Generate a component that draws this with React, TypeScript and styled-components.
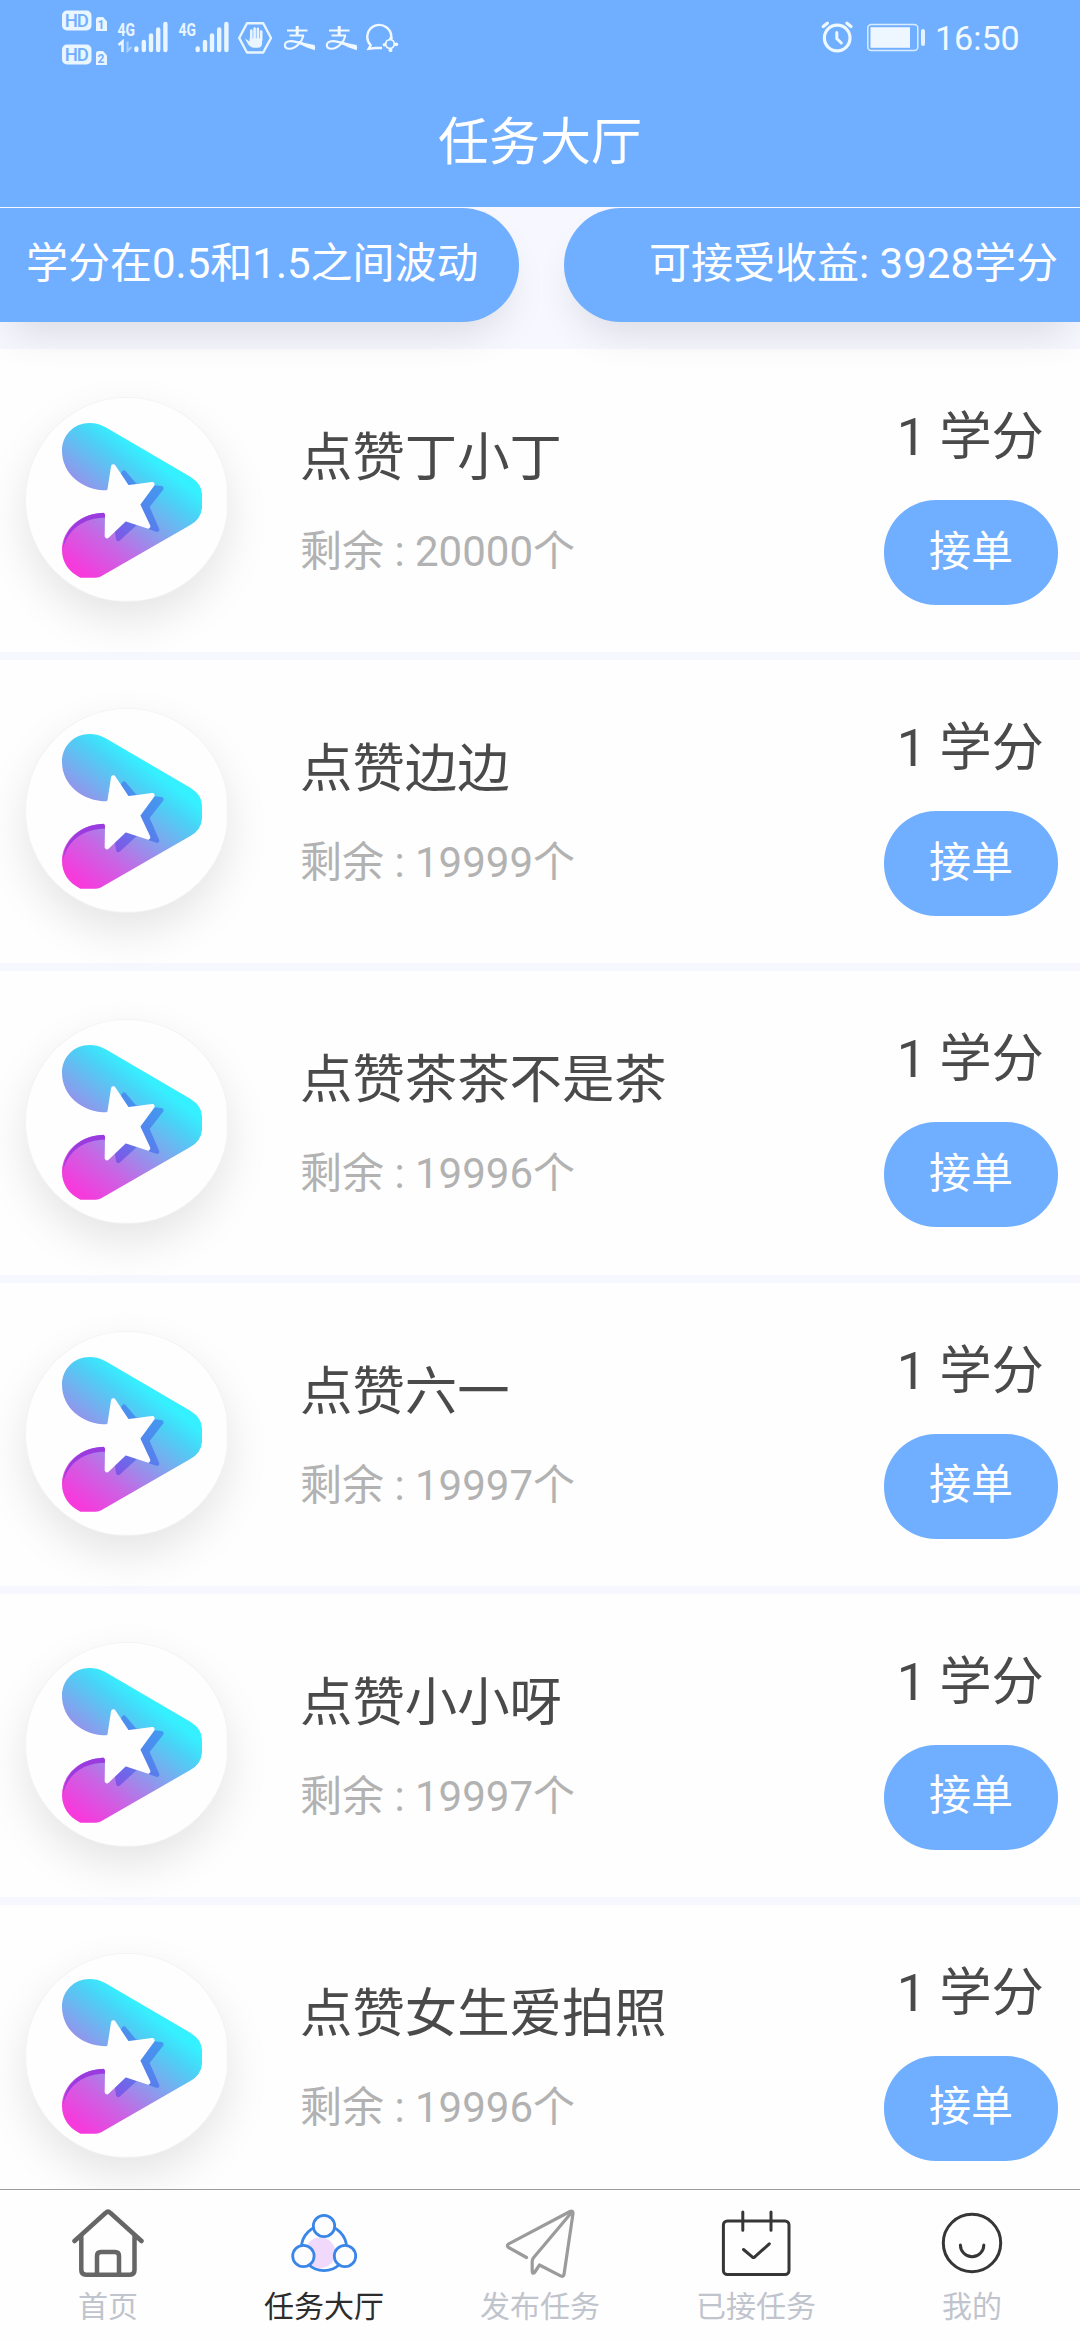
import React from "react";
import styled, { createGlobalStyle } from "styled-components";

const BLUE = "#70aeff";

const GlobalStyle = createGlobalStyle`
  * { box-sizing: border-box; }
  body {
    margin: 0;
    background: #fefefe;
    font-family: Roboto, "Noto Sans CJK SC", sans-serif;
  }
`;

const Screen = styled.div`
  width: 1080px;
  height: 2340px;
  display: flex;
  flex-direction: column;
  overflow: hidden;
  background: #fefefe;
`;

const Header = styled.header`
  position: relative;
  z-index: 2;
  height: 207px;
  flex: none;
  background: ${BLUE};
  color: #fff;
`;

const StatusBar = styled.div`
  height: 80px;
  display: flex;
  justify-content: space-between;
`;

const StatusGroup = styled.div<{ $inset?: number }>`
  display: flex;
  padding-left: ${(p) => p.$inset ?? 0}px;
`;

const StatusIcon = styled.svg<{ $before?: number; $after?: number }>`
  display: block;
  flex: none;
  margin-left: ${(p) => p.$before ?? 0}px;
  margin-right: ${(p) => p.$after ?? 0}px;
`;

const Clock = styled.span`
  margin: 18px 60px 0 0;
  width: 85px;
  font-size: 34px;
  line-height: 40px;
  color: #f2faff;
  white-space: nowrap;
`;

const PageTitle = styled.h1`
  margin: 28px 0 0;
  text-align: center;
  font-size: 51px;
  font-weight: 400;
  line-height: 70px;
`;

const Summary = styled.section`
  position: relative;
  z-index: 1;
  flex: none;
  height: 142px;
  padding-top: 1px;
  display: flex;
  justify-content: space-between;
  align-items: flex-start;
  background: #f6f7ff;
`;

const Pill = styled.div<{ $side: "left" | "right" }>`
  width: ${(p) => (p.$side === "left" ? 519 : 516)}px;
  height: 114px;
  padding: ${(p) => (p.$side === "left" ? "0 0 0 26px" : "0 0 0 85px")};
  border-radius: ${(p) => (p.$side === "left" ? "0 57px 57px 0" : "57px 0 0 57px")};
  background: ${BLUE};
  box-shadow: 0 22px 42px -12px rgba(0, 0, 0, 0.12);
  color: #fff;
  font-size: 42px;
  line-height: 112px;
  white-space: nowrap;
`;

const TaskList = styled.main`
  flex: 1;
  min-height: 0;
  overflow: hidden;
`;

const TaskRow = styled.article`
  height: 311.2px;
  display: flex;
  align-items: flex-start;
  padding: 48px 22px 0 25px;
  border-bottom: 8px solid #f6f7ff;
`;

const Avatar = styled.div`
  width: 204px;
  height: 205px;
  flex: none;
  border-radius: 50%;
  overflow: hidden;
  background: #f3f3f4;
  box-shadow: 0 18px 44px rgba(0, 0, 0, 0.1);
  svg { display: block; }
`;

const TaskInfo = styled.div`
  flex: 1;
  margin-left: 71px;
  padding-top: 27px;
`;

const TaskName = styled.div`
  font-size: 52.4px;
  line-height: 68px;
  color: #4a4a4a;
`;

const Remaining = styled.div`
  margin-top: 32px;
  font-size: 42px;
  line-height: 56px;
  color: #b2b2b2;
`;

const TaskSide = styled.div`
  display: flex;
  flex-direction: column;
  align-items: flex-end;
`;

const Reward = styled.div`
  padding-right: 14px;
  margin-top: 6px;
  font-size: 52.4px;
  line-height: 68px;
  color: #4a4a4a;
`;

const AcceptButton = styled.button`
  width: 174px;
  height: 105px;
  margin-top: 29px;
  padding: 0 0 2px;
  border: 0;
  border-radius: 52px;
  background: ${BLUE};
  color: #fff;
  font: 400 42px/56px Roboto, "Noto Sans CJK SC", sans-serif;
`;

const TabBar = styled.nav`
  flex: none;
  height: 151px;
  display: flex;
  border-top: 1px solid #999c9e;
  background: #fefefe;
`;

const Tab = styled.div<{ $active?: boolean }>`
  flex: 1;
  display: flex;
  flex-direction: column;
  align-items: center;
  padding-top: 17px;
  font-size: 30px;
  line-height: 40px;
  color: ${(p) => (p.$active ? "#2c2c2c" : "#c0c4cc")};
  svg { display: block; margin-bottom: 8px; }
`;

const Bars = ({ xs }: { xs: number[] }) => (
  <g stroke="#e9f6ff" strokeWidth="4.4" strokeLinecap="round">
    {xs.map((x, i) => (
      <line key={x} x1={x} x2={x} y1={[48.5, 42, 35.5, 29.5, 24][i]} y2={50} />
    ))}
  </g>
);

const NetworkIcons = () => (
  <StatusIcon width="190" height="80" viewBox="40 0 190 80" fontFamily="Roboto, sans-serif" fontWeight="700">
    <rect x="62" y="10.5" width="29.5" height="20" rx="5" fill="#e9f6ff" />
    <rect x="62" y="44.5" width="29.5" height="20" rx="5" fill="#e9f6ff" />
    <g fill={BLUE} fontSize="18.5" fontWeight="500" textAnchor="middle">
      <text x="76.800" y="27.200" textLength="24">HD</text>
      <text x="76.800" y="61.200" textLength="24">HD</text>
    </g>
    <path d="M96 19.500q0-2.500 2.500-2.500h4.500l4 4.500v9.500h-11z" fill="#e9f6ff" />
    <path d="M96 53.500q0-2.500 2.500-2.500h4.500l4 4.500v9.500h-11z" fill="#e9f6ff" />
    <g fill={BLUE} fontSize="12" textAnchor="middle">
      <text x="101" y="28.500">1</text>
      <text x="101" y="62.500">2</text>
    </g>
    <g fill="#e9f6ff" fontSize="19" fontWeight="700">
      <text x="117.500" y="35.500" textLength="17.500" lengthAdjust="spacingAndGlyphs">4G</text>
      <text x="178.500" y="35.500" textLength="17.500" lengthAdjust="spacingAndGlyphs">4G</text>
    </g>
    <path d="M118.500 45l4-3.500V52" fill="none" stroke="#e9f6ff" strokeWidth="2.600" />
    <path d="M127.500 41.500V51l4-4" fill="none" stroke="#a9d2ff" strokeWidth="2" />
    <Bars xs={[136.4, 143.8, 151, 158.2, 165.4]} />
    <Bars xs={[197.7, 205, 212, 219.2, 226.4]} />
  </StatusIcon>
);

const HandIcon = () => (
  <StatusIcon width="36" height="80" viewBox="237 0 36 80" $before={7}>
    <path d="M247 23.300h16.200L271 38l-7.800 14.500H247L239.200 38z" fill="none" stroke="#e9f6ff" strokeWidth="2.400" strokeLinejoin="round" />
    <g stroke="#e9f6ff" strokeWidth="2.600" strokeLinecap="round" fill="#e9f6ff">
      <path d="M251.300 40V30.500M254.600 39V28.500M257.900 39V28.800M261.200 40V31.500" />
      <path d="M246.800 40.500l3.500 2.500v-4h11v4q0 4-3.500 4h-4q-4 0-7-6.500z" strokeWidth="1.500" />
    </g>
  </StatusIcon>
);

const PayIcon = ({ gap }: { gap: number }) => (
  <StatusIcon width="33" height="80" viewBox="282.500 0 33 80" $before={gap}>
    <g fill="none" stroke="#f0f9ff">
      <path d="M286.500 30.400h20.500M289 35.500h14.500" strokeWidth="2" />
      <path d="M296.700 26v10" strokeWidth="3" />
      <path d="M303 35.500c-1.500 6-7 12.800-14 13.300-5.500.3-6.300-5.600-1.500-7.300 6-1.800 15 2.500 27 6.800" strokeWidth="2" />
    </g>
    <path d="M299 41.300c5 1.800 10 2.700 15.300 3.600v5.300c-6-1.800-11.500-4.300-16.500-6.800z" fill="#f0f9ff" />
  </StatusIcon>
);

const ChatIcon = () => (
  <StatusIcon width="34" height="80" viewBox="364 0 34 80" $before={7.5}>
    <path d="M390.300 37.500a12 12 0 1 0-20.600 7.800l-2 3.500 6.800-.8h6.500" fill="none" stroke="#f0f9ff" strokeWidth="2.400" />
    <circle cx="389" cy="44" r="4.300" fill="none" stroke="#f0f9ff" strokeWidth="1.800" />
    <g fill="#f0f9ff">
      <circle cx="390" cy="38.200" r="1.800" />
      <circle cx="395.300" cy="44.300" r="1.900" />
      <circle cx="389.500" cy="50.200" r="1.900" />
      <circle cx="383.300" cy="44.700" r="1.700" />
    </g>
  </StatusIcon>
);

const AlarmIcon = () => (
  <StatusIcon width="34" height="80" viewBox="820 0 34 80">
    <g fill="none" stroke="#edf8ff" strokeLinecap="round">
      <circle cx="837.200" cy="38" r="12.800" strokeWidth="3.200" />
      <path d="M836.800 32.500v6.200l4.500 4.300" strokeWidth="3" />
      <path d="M823.300 26.500l4-3.300M851 26.500l-4-3.300" strokeWidth="3.400" />
    </g>
  </StatusIcon>
);

const BatteryIcon = () => (
  <StatusIcon width="60" height="80" viewBox="866 0 60 80" $before={12} $after={9}>
    <rect x="867.800" y="24.600" width="50" height="26" rx="3.500" fill="none" stroke="#d8edff" strokeWidth="1.500" />
    <rect x="870.500" y="27.200" width="39.500" height="20.600" fill="#eef6ff" />
    <rect x="921" y="29" width="4" height="17" rx="2" fill="#e4f3ff" />
  </StatusIcon>
);

const PlayLogo = () => (
  <svg width="204" height="205" viewBox="76 80 612 615">
    <defs>
      <linearGradient id="play" gradientUnits="userSpaceOnUse" x1="250" y1="610" x2="494" y2="294">
        <stop offset="0" stopColor="#f63adc" />
        <stop offset=".28" stopColor="#c964e4" />
        <stop offset=".58" stopColor="#85a0ed" />
        <stop offset=".86" stopColor="#48d4f6" />
        <stop offset="1" stopColor="#35f0ff" />
      </linearGradient>
      <linearGradient id="shade" gradientUnits="userSpaceOnUse" x1="340" y1="510" x2="480" y2="340">
        <stop offset="0" stopColor="#8650e6" />
        <stop offset=".5" stopColor="#5680ec" />
        <stop offset="1" stopColor="#419bf0" />
      </linearGradient>
      <clipPath id="disc">
        <ellipse cx="382" cy="387.500" rx="303" ry="305" />
      </clipPath>
    </defs>
    <g clipPath="url(#disc)">
      <rect x="79" y="82" width="602" height="609" fill="#fefefe" />
    </g>
    <path
      d="M270 158Q296 158 318 171L572 319Q607 341 607 372V412Q605 445 572 464L306 617Q299 622 288 622H242C208 606 187 576 187 540C187 474 245 427 317 427L380 394L323 360C245 360 187 309 187 241C187 194 223 158 270 158Z"
      fill="url(#play)"
    />
    <path d="M190 536C195 470 247 427 317 427V442C255 442 204 474 190 536Z" fill="#9a3be0" />
    <path
      d="M373 307L406 346L485 354L442 409L472 478L410 456L356 505L340 395Z"
      fill="url(#shade)"
      stroke="url(#shade)"
      strokeWidth="14"
      strokeLinejoin="round"
    />
    <path
      d="M341 289L383 352L458 342L414 402L445 468L377 445L322 497L323 430L300 394L330 360Z"
      fill="#fefefe"
      stroke="#fefefe"
      strokeWidth="14"
      strokeLinejoin="round"
    />
  </svg>
);

const TabIcon = ({ children, color, width }: { children: React.ReactNode; color: string; width: number }) => (
  <svg width="72" height="72" viewBox="0 0 72 72" fill="none" stroke={color} strokeWidth={width} strokeLinecap="round" strokeLinejoin="round">
    {children}
  </svg>
);

const tabs = [
  {
    label: "首页",
    icon: (
      <TabIcon color="#666" width={4.5}>
        <path d="M2.500 34L33.500 6q2.500-2.500 5 0L69.500 34M9.300 29v34q0 4.700 4.700 4.700h44q4.500 0 4.500-4.700V29M25 67V49q0-4 4-4h14q4 0 4 4v18" />
      </TabIcon>
    ),
  },
  {
    label: "任务大厅",
    active: true,
    icon: (
      <TabIcon color="#3a86e8" width={2.8}>
        <circle cx="32.200" cy="45.700" r="15.300" fill="#f1d9fb" stroke="none" />
        <circle cx="36" cy="41" r="22.600" />
        <circle cx="36" cy="19" r="10.700" fill="#fefefe" />
        <circle cx="15.400" cy="49" r="10.700" fill="#fefefe" />
        <circle cx="57" cy="49" r="10.700" fill="#fefefe" />
      </TabIcon>
    ),
  },
  {
    label: "发布任务",
    icon: (
      <TabIcon color="#9b9b9b" width={3.2}>
        <path d="M22.500 50.500L4.500 40.500q-2.300-1.800.2-3.600L66 4.500q3.200-1.200 3 2L60 67.500q-.6 2.400-3 1.600L35.500 58l-5 7.500q-2.300 2-2.300-1.500V54.500q0-2 1.300-3.700L68 5" />
      </TabIcon>
    ),
  },
  {
    label: "已接任务",
    icon: (
      <TabIcon color="#363636" width={3}>
        <rect x="3.400" y="14" width="65.600" height="53.500" rx="4" />
        <path d="M22.800 5v18.300M51 5v18.300M23.500 42.500l9 7.700q1 .7 2 0L49.300 36.800" />
      </TabIcon>
    ),
  },
  {
    label: "我的",
    icon: (
      <TabIcon color="#363636" width={3}>
        <circle cx="36" cy="36" r="28.700" />
        <path d="M24.400 38a11.700 11.700 0 0 0 23.400 0" />
      </TabIcon>
    ),
  },
];

const tasks = [
  { name: "点赞丁小丁", left: 20000 },
  { name: "点赞边边", left: 19999 },
  { name: "点赞茶茶不是茶", left: 19996 },
  { name: "点赞六一", left: 19997 },
  { name: "点赞小小呀", left: 19997 },
  { name: "点赞女生爱拍照", left: 19996 },
];

export default function App() {
  return (
    <>
      <GlobalStyle />
      <Screen>
        <Header>
          <StatusBar>
            <StatusGroup $inset={40}>
              <NetworkIcons />
              <HandIcon />
              <PayIcon gap={9.5} />
              <PayIcon gap={9} />
              <ChatIcon />
            </StatusGroup>
            <StatusGroup>
              <AlarmIcon />
              <BatteryIcon />
              <Clock>16:50</Clock>
            </StatusGroup>
          </StatusBar>
          <PageTitle>任务大厅</PageTitle>
        </Header>
        <Summary>
          <Pill $side="left">学分在0.5和1.5之间波动</Pill>
          <Pill $side="right">可接受收益: 3928学分</Pill>
        </Summary>
        <TaskList>
          {tasks.map((task) => (
            <TaskRow key={task.name}>
              <Avatar>
                <PlayLogo />
              </Avatar>
              <TaskInfo>
                <TaskName>{task.name}</TaskName>
                <Remaining>剩余 : {task.left}个</Remaining>
              </TaskInfo>
              <TaskSide>
                <Reward>1 学分</Reward>
                <AcceptButton>接单</AcceptButton>
              </TaskSide>
            </TaskRow>
          ))}
        </TaskList>
        <TabBar>
          {tabs.map((tab) => (
            <Tab key={tab.label} $active={tab.active}>
              {tab.icon}
              {tab.label}
            </Tab>
          ))}
        </TabBar>
      </Screen>
    </>
  );
}
